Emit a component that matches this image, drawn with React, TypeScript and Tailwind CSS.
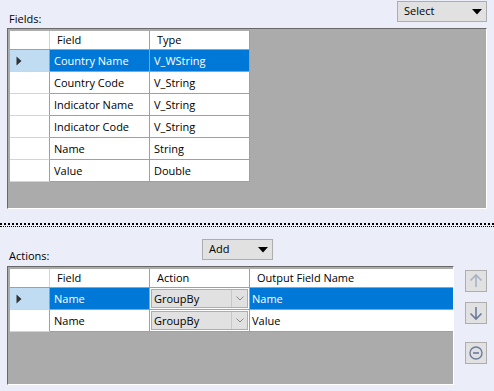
import React from 'react'

type Col = { title: string; width: string }

const fieldCols: Col[] = [
    { title: 'Field', width: 'w-[100px]' },
    { title: 'Type', width: 'w-[100px]' },
]

const fields = [
    ['Country Name', 'V_WString'],
    ['Country Code', 'V_String'],
    ['Indicator Name', 'V_String'],
    ['Indicator Code', 'V_String'],
    ['Name', 'String'],
    ['Value', 'Double'],
]

const actions = [
    ['Name', 'GroupBy', 'Name'],
    ['Name', 'GroupBy', 'Value'],
]

function Triangle() {
    return (
        <svg width="10" height="6" viewBox="0 0 10 6" aria-hidden="true">
            <path d="M0 0H10L5 5.5Z" fill="#000" />
        </svg>
    )
}

function RowMarker({ active }: { active: boolean }) {
    return (
        <div
            className={`w-[40px] h-[22px] border-r border-b border-[#d4d4d4] border-r-[#a0a0a0] flex items-center pl-[6px] ${active ? 'bg-[#bfdcf3]' : 'bg-white'}`}
        >
            {active && (
                <svg width="6" height="10" viewBox="0 0 6 10" aria-hidden="true">
                    <path d="M0.5 0.5V9.5L5.5 5Z" fill="#333" />
                </svg>
            )}
        </div>
    )
}

function Dropdown({ label, className }: { label: string; className: string }) {
    return (
        <div
            className={`h-[21px] bg-[#e1e1e1] border border-[#adadad] flex items-center justify-between pl-[6px] pr-[4px] ${className}`}
        >
            <span>{label}</span>
            <Triangle />
        </div>
    )
}

function GroupByCell() {
    return (
        <div className="w-[100px] h-[22px] border-r border-b border-[#a0a0a0] p-[1px] bg-white">
            <div className="h-full bg-[#e1e1e1] border border-[#adadad] flex">
                <span className="flex-1 pl-[2px] leading-[18px]">GroupBy</span>
                <div className="w-[16px] border-l border-[#c8c8c8] flex items-center justify-center">
                    <svg width="8" height="5" viewBox="0 0 8 5" aria-hidden="true">
                        <path d="M0.5 0.5L4 4L7.5 0.5" fill="none" stroke="#888" />
                    </svg>
                </div>
            </div>
        </div>
    )
}

function SideButton({ children }: { children: React.ReactNode }) {
    return (
        <div className="w-[22px] h-[22px] bg-[#e1e1e1] border border-[#adadad] flex items-center justify-center">
            {children}
        </div>
    )
}

export default function App() {
    return (
        <div
            className="w-[494px] h-[391px] bg-[#ebeef9] text-[11px] text-black overflow-hidden"
            style={{ fontFamily: '"Open Sans", "Noto Sans", sans-serif' }}
        >
            {/* Fields */}
            <div className="pl-[7px] pr-[7px]">
                <div className="h-[28px] flex items-start justify-between">
                    <span className="mt-[12px] pl-[2px] leading-[14px]">Fields:</span>
                    <Dropdown label="Select" className="w-[90px] mt-[1px]" />
                </div>
                <div className="h-[181px] bg-[#ababab] border-t border-l border-[#696969] border-r border-b border-r-white border-b-white pt-[2px] pl-[2px]">
                    <div className="flex bg-white w-[240px] h-[19px] border-b border-[#a0a0a0]">
                        <div className="w-[40px] border-r border-[#d4d4d4]" />
                        {fieldCols.map((c) => (
                            <div key={c.title} className={`${c.width} border-r border-[#a0a0a0] pl-[7px] leading-[18px]`}>
                                {c.title}
                            </div>
                        ))}
                    </div>
                    {fields.map((row, i) => (
                        <div key={row[0]} className="flex w-[240px]">
                            <RowMarker active={i === 0} />
                            {row.map((cell, j) => (
                                <div
                                    key={j}
                                    className={`w-[100px] h-[22px] border-r border-b border-[#a0a0a0] pl-[4px] leading-[21px] ${i === 0 ? 'bg-[#0078d7] text-white' : 'bg-white'}`}
                                >
                                    {cell}
                                </div>
                            ))}
                        </div>
                    ))}
                </div>
            </div>

            {/* splitter */}
            <div className="mt-[14px] h-[4px] border-t-2 border-b border-dotted border-black" />

            {/* Actions */}
            <div className="pl-[7px] pr-[7px] pt-[12px]">
                <div className="h-[27px] flex items-start">
                    <span className="mt-[10px] pl-[2px] leading-[14px] w-[195px]">Actions:</span>
                    <Dropdown label="Add" className="w-[71px]" />
                </div>
                <div className="flex gap-[11px]">
                    <div className="w-[447px] h-[119px] bg-[#ababab] border-t border-l border-[#696969] border-r border-b border-r-white border-b-white pt-[2px] pl-[2px]">
                        <div className="flex bg-white w-[443px] h-[19px] border-b border-[#a0a0a0]">
                            <div className="w-[40px] border-r border-[#d4d4d4]" />
                            <div className="w-[100px] border-r border-[#a0a0a0] pl-[7px] leading-[18px]">Field</div>
                            <div className="w-[100px] border-r border-[#a0a0a0] pl-[7px] leading-[18px]">Action</div>
                            <div className="w-[203px] pl-[7px] leading-[18px]">Output Field Name</div>
                        </div>
                        {actions.map((row, i) => (
                            <div key={i} className="flex w-[443px]">
                                <RowMarker active={i === 0} />
                                <div
                                    className={`w-[100px] h-[22px] border-r border-b border-[#a0a0a0] pl-[4px] leading-[21px] ${i === 0 ? 'bg-[#0078d7] text-white' : 'bg-white'}`}
                                >
                                    {row[0]}
                                </div>
                                <GroupByCell />
                                <div
                                    className={`w-[203px] h-[22px] border-b border-[#a0a0a0] pl-[2px] leading-[21px] ${i === 0 ? 'bg-[#0078d7] text-white' : 'bg-white'}`}
                                >
                                    {row[2]}
                                </div>
                            </div>
                        ))}
                    </div>
                    <div className="flex flex-col pt-[4px]">
                        <SideButton>
                            <svg width="16" height="16" viewBox="0 0 16 16" aria-hidden="true">
                                <path d="M8 14V2M2.5 7.5L8 2L13.5 7.5" fill="none" stroke="#a9b3c6" strokeWidth="1.6" />
                            </svg>
                        </SideButton>
                        <div className="h-[10px]" />
                        <SideButton>
                            <svg width="16" height="16" viewBox="0 0 16 16" aria-hidden="true">
                                <path d="M8 2V14M2.5 8.5L8 14L13.5 8.5" fill="none" stroke="#6b7c9e" strokeWidth="1.6" />
                            </svg>
                        </SideButton>
                        <div className="h-[18px]" />
                        <SideButton>
                            <svg width="16" height="16" viewBox="0 0 16 16" aria-hidden="true">
                                <circle cx="8" cy="8" r="6" fill="none" stroke="#6b7c9e" strokeWidth="1.4" />
                                <path d="M5 8H11" stroke="#6b7c9e" strokeWidth="1.6" />
                            </svg>
                        </SideButton>
                    </div>
                </div>
            </div>
        </div>
    )
}
